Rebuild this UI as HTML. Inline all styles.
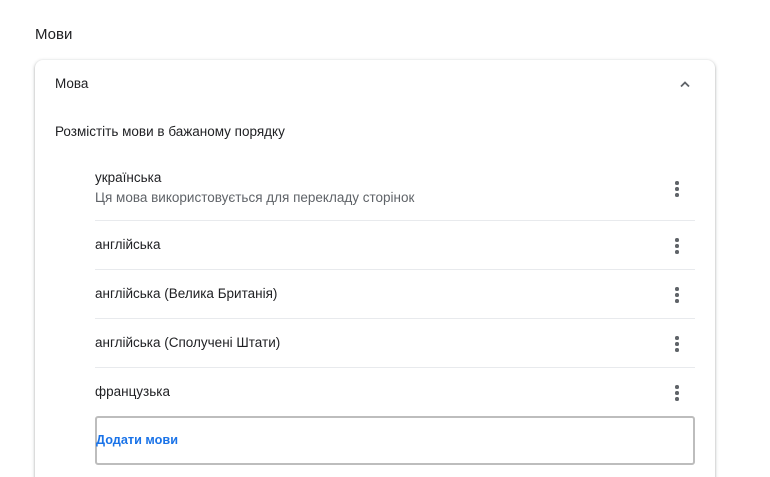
<!DOCTYPE html>
<html><head><meta charset="utf-8"><style>
html,body{margin:0;width:770px;height:477px;overflow:hidden}
body{background:#fff;font-family:"Liberation Sans",Arial,sans-serif;color:#202124;font-size:13.5px}
#w{position:relative;width:770px;height:477px;overflow:hidden}
.a{position:absolute}
.card{left:35px;top:60px;width:680px;height:440px;border-radius:8px;background:#fff;box-shadow:0 1px 2px rgba(60,64,67,.3),0 1px 3px 1px rgba(60,64,67,.15)}
.sep{position:absolute;left:95px;width:600px;height:1px;background:#e8eaed}
.dots{position:absolute;left:675px;width:4px}
.dots i{display:block;width:3.5px;height:3.5px;border-radius:50%;background:#5f6368;margin-bottom:2.5px}
</style></head><body><div id="w">
<div class="a" style="left:35px;top:26px;font-size:15px">Мови</div>
<div class="a card"></div>
<div class="a" style="left:55px;top:76px">Мова</div>
<svg class="a" style="left:678px;top:77px" width="14" height="14" viewBox="0 0 14 14"><path d="M3 9.5L7 5.5L11 9.5" fill="none" stroke="#5f6368" stroke-width="1.8"/></svg>
<div class="a" style="left:55px;top:124px">Розмістіть мови в бажаному порядку</div>
<div class="a" style="left:95px;top:170px">українська</div>
<div class="a" style="left:95px;top:190px;color:#5f6368">Ця мова використовується для перекладу сторінок</div>
<div class="dots" style="top:181px"><i></i><i></i><i></i></div>
<div class="sep" style="top:220px"></div>
<div class="a" style="left:95px;top:237px">англійська</div>
<div class="dots" style="top:238px"><i></i><i></i><i></i></div>
<div class="sep" style="top:269px"></div>
<div class="a" style="left:95px;top:286px">англійська (Велика Британія)</div>
<div class="dots" style="top:287px"><i></i><i></i><i></i></div>
<div class="sep" style="top:318px"></div>
<div class="a" style="left:95px;top:335px">англійська (Сполучені Штати)</div>
<div class="dots" style="top:336px"><i></i><i></i><i></i></div>
<div class="sep" style="top:367px"></div>
<div class="a" style="left:95px;top:384px">французька</div>
<div class="dots" style="top:385px"><i></i><i></i><i></i></div>
<div class="a" style="left:95px;top:416px;width:596px;height:45px;border:2px solid #bdbdbd;border-radius:3px"></div>
<div class="a" style="left:96px;top:433px;color:#1a73e8;font-weight:bold;font-size:12.7px">Додати мови</div>
</div></body></html>
